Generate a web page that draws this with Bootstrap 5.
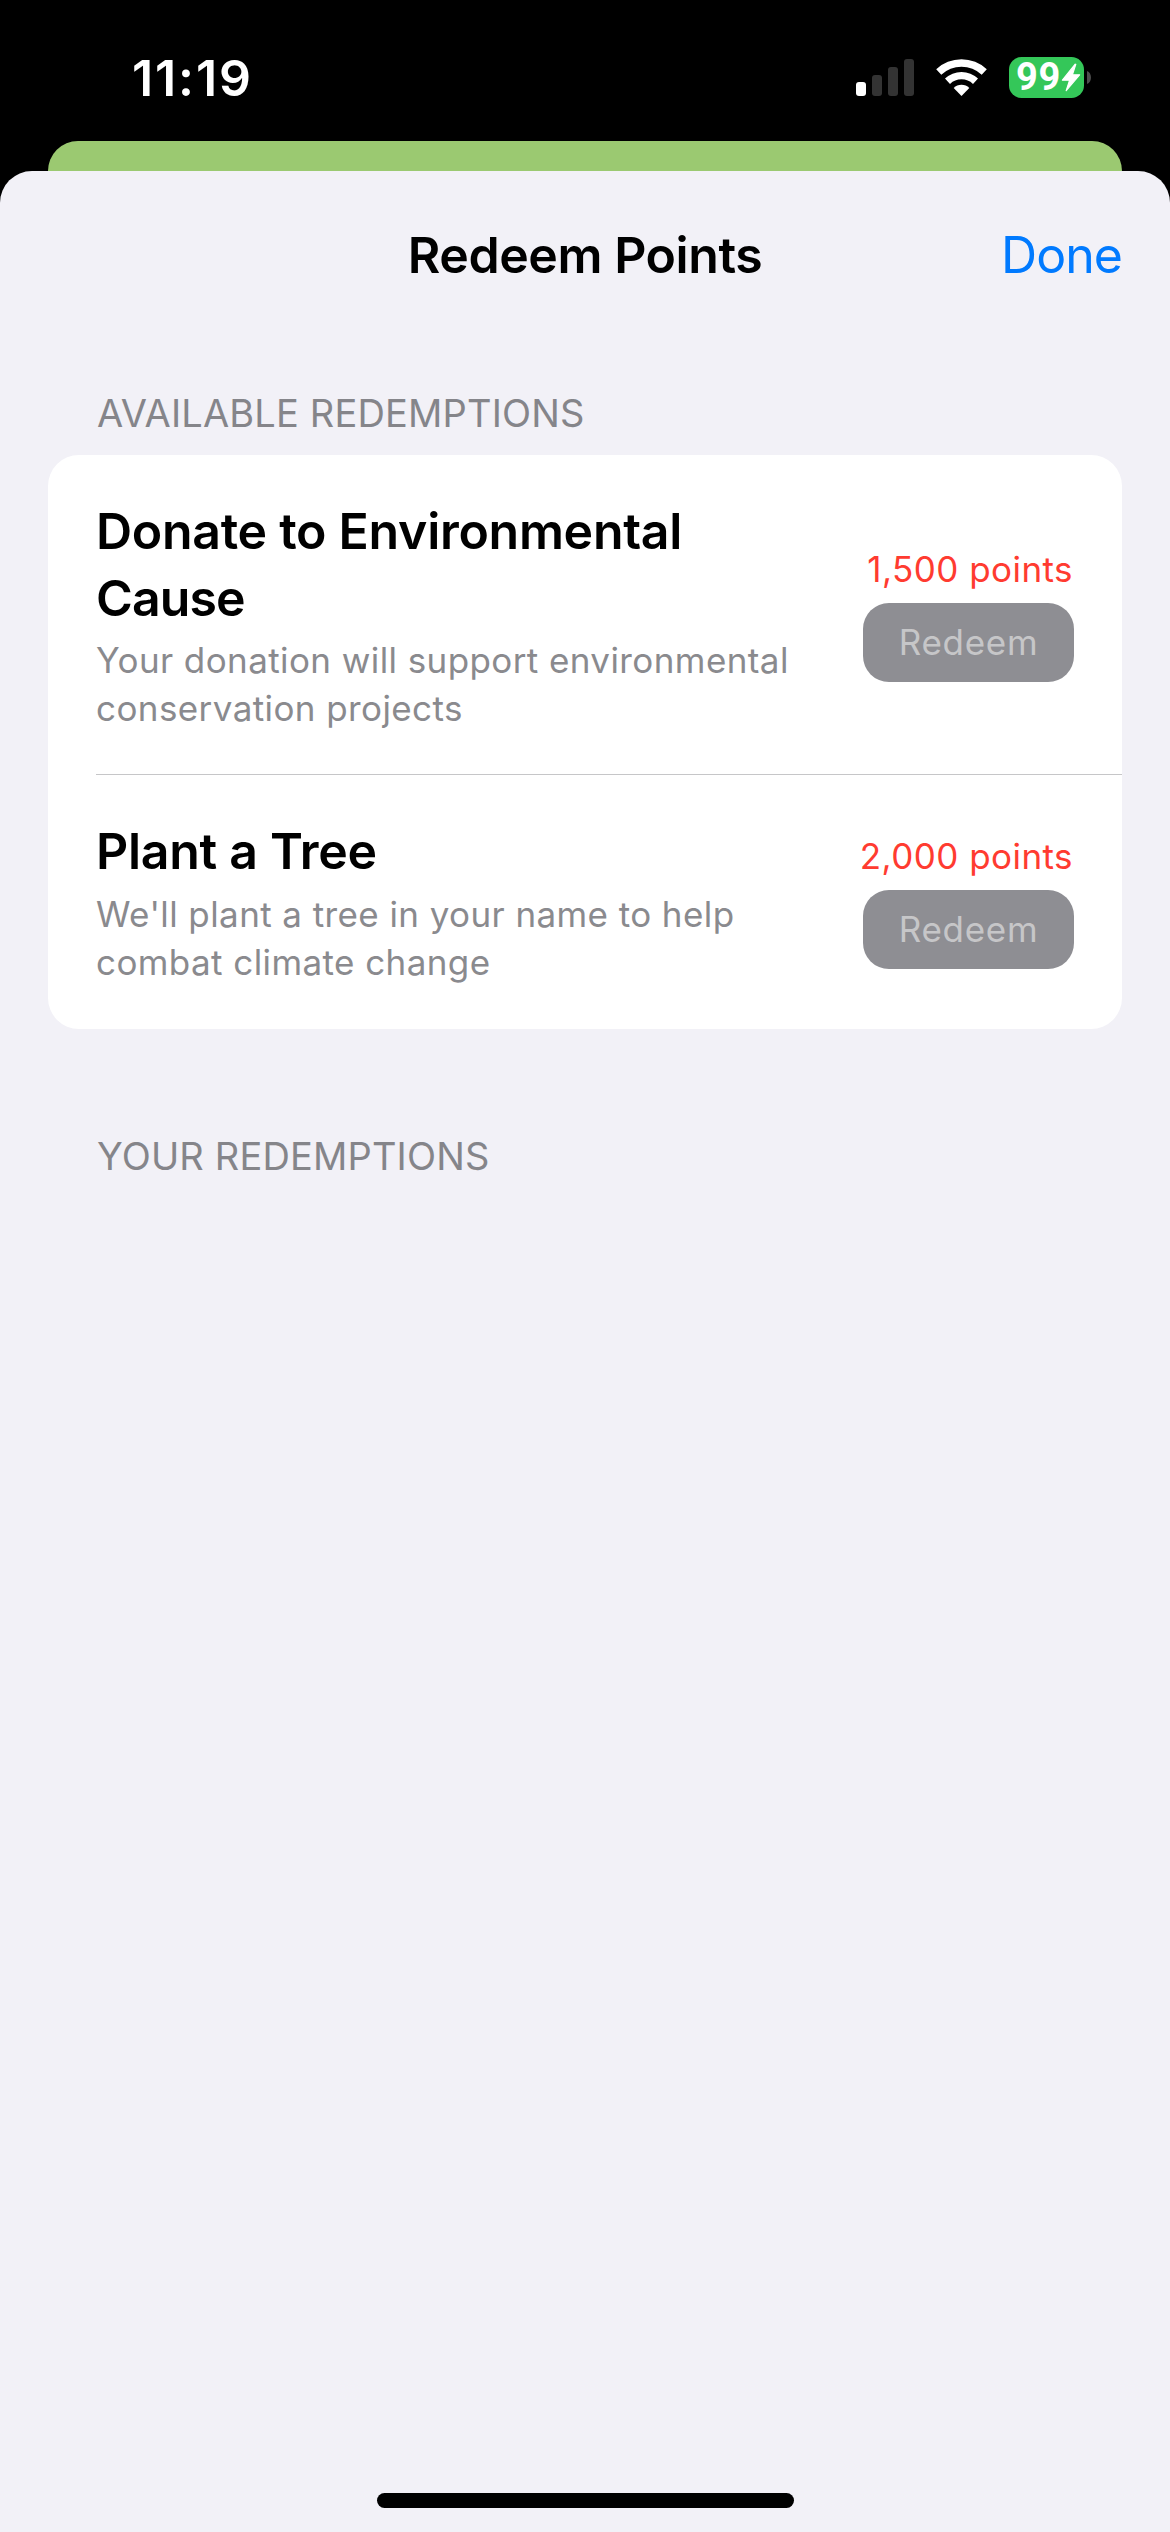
<!DOCTYPE html>
<html lang="en">
<head>
<meta charset="utf-8">
<meta name="viewport" content="width=device-width, initial-scale=1">
<title>Redeem Points</title>
<link rel="stylesheet" href="https://cdn.jsdelivr.net/npm/bootstrap@5.3.0/dist/css/bootstrap.min.css">
<script src="https://cdn.jsdelivr.net/npm/bootstrap@5.3.0/dist/js/bootstrap.bundle.min.js"></script>
<style>
  body { font-family: Inter, "Liberation Sans", sans-serif; background: #000; color: #000; min-height: 2532px; }
  .phone { width: 1170px; height: 2532px; }
  .status { height: 141px; padding: 58px 79px 0 132px; color: #fff; }
  .clock { font-size: 50px; font-weight: 600; line-height: 40px; letter-spacing: 1.9px; }
  .signals { height: 41px; margin-top: -1px; }
  .cell-icon { margin: 2px 22px 0 0; }
  .wifi-icon { margin: 2px 22px 0 0; }
  .battery { width: 75px; height: 41px; padding-left: 7px; border-radius: 12.5px; background: #34c759; }
  .battery-level { font-family: Roboto, "Liberation Sans", sans-serif; font-size: 38px; font-weight: 700; line-height: 41px; letter-spacing: .6px; }
  .battery-tip { margin-left: 3px; }
  .behind { height: 30px; margin: 0 48px; background: #9bc971; border-radius: 30px 30px 0 0; }
  .sheet { background: #f2f1f7; border-radius: 32px 32px 0 0; }
  .sheet-head { height: 219px; padding: 51px 48px 0; }
  .sheet-title { font-size: 50px; font-weight: 600; line-height: 67px; letter-spacing: -.44px; }
  .done { font-size: 50px; line-height: 67px; letter-spacing: -.97px; color: #007aff; }
  .section-label { font-size: 38px; font-weight: 400; line-height: 46px; letter-spacing: .16px; color: #85858a; margin: 0 97px; }
  .offers { margin: 19px 48px 104px; border-radius: 31px; overflow: hidden; background: #fff; }
  .offer { padding: 43px 48px 42px 0; margin-left: 48px; }
  .offer + .offer { border-top: 1px solid #c6c6c8; padding-bottom: 43px; }
  .offer-name { font-size: 50px; font-weight: 600; line-height: 67px; letter-spacing: -.28px; margin-bottom: 4px; }
  .offer + .offer .offer-name { margin-bottom: 5px; }
  .name-tail { letter-spacing: -.9px; }
  .offer-text { font-size: 35px; line-height: 48px; letter-spacing: .41px; color: #8a8a8e; width: 720px; }
  .offer-side { margin-bottom: 1px; }
  .cost { font-size: 35px; line-height: 45px; letter-spacing: .45px; color: #ff3b30; margin: 0 1px 11px 0; }
  .redeem { width: 211px; height: 79px; padding: 0; border: 0; border-radius: 26px; font-size: 35px; line-height: 79px; letter-spacing: .7px; }
  .redeem:disabled { background: #8e8e93; color: #c6c6c8; opacity: 1; }
  .home-bar { width: 417px; height: 15px; margin-bottom: 24px; border-radius: 8px; background: #000; }
</style>
</head>
<body>
<div class="phone d-flex flex-column">
  <div class="status d-flex justify-content-between align-items-start">
    <div class="clock">11:19</div>
    <div class="signals d-flex align-items-start">
      <svg class="cell-icon" width="58" height="37" viewBox="0 0 58 37">
        <rect x="0" y="23" width="10" height="14" rx="3" fill="#fff"/>
        <rect x="16" y="16" width="10" height="21" rx="3" fill="#333"/>
        <rect x="32" y="8" width="10" height="29" rx="3" fill="#333"/>
        <rect x="48" y="0" width="10" height="37" rx="3" fill="#333"/>
      </svg>
      <svg class="wifi-icon" width="51" height="37" viewBox="0 0 51 37" fill="#fff">
        <path d="M.2 10.2A37 37 0 0 1 50.8 10.2L45.7 15.8A29.3 29.3 0 0 0 5.3 15.8Z"/>
        <path d="M9 19.6A24 24 0 0 1 42 19.6L37 24.9A16.7 16.7 0 0 0 14 24.9Z"/>
        <path d="M17.7 29A11 11 0 0 1 33.3 29L25.5 37Z"/>
      </svg>
      <div class="battery d-flex align-items-center">
        <span class="battery-level">99</span>
        <svg width="20" height="29" viewBox="0 0 20 29" fill="#fff" stroke="#fff" stroke-width="1.2" stroke-linejoin="round">
          <path d="M14.2 1.2L1.4 17.2H8.6L5.2 27.6L18.6 11.8H11.4L14.8 1.4Z"/>
        </svg>
      </div>
      <svg class="battery-tip align-self-center" width="4" height="13" viewBox="0 0 4 13"><path d="M0 0C5.3 2 5.3 11 0 13Z" fill="#4d4d4d"/></svg>
    </div>
  </div>
  <div class="behind"></div>
  <main class="sheet flex-grow-1 d-flex flex-column">
    <header class="sheet-head row g-0 align-items-start">
      <div class="col-3"></div>
      <h1 class="sheet-title col-6 text-center mb-0">Redeem Points</h1>
      <a class="done col-3 text-end text-decoration-none" href="#">Done</a>
    </header>
    <h2 class="section-label">AVAILABLE REDEMPTIONS</h2>
    <div class="offers">
      <div class="offer d-flex justify-content-between align-items-center">
        <div>
          <h3 class="offer-name">Donate to Environmental<br><span class="name-tail">Cause</span></h3>
          <p class="offer-text mb-0">Your donation will support environmental conservation projects</p>
        </div>
        <div class="offer-side d-flex flex-column align-items-end">
          <div class="cost">1,500 points</div>
          <button class="redeem btn" disabled>Redeem</button>
        </div>
      </div>
      <div class="offer d-flex justify-content-between align-items-center">
        <div>
          <h3 class="offer-name">Plant a Tree</h3>
          <p class="offer-text mb-0">We'll plant a tree in your name to help combat climate change</p>
        </div>
        <div class="offer-side d-flex flex-column align-items-end">
          <div class="cost">2,000 points</div>
          <button class="redeem btn" disabled>Redeem</button>
        </div>
      </div>
    </div>
    <h2 class="section-label">YOUR REDEMPTIONS</h2>
    <div class="home-bar mt-auto mx-auto"></div>
  </main>
</div>
</body>
</html>
